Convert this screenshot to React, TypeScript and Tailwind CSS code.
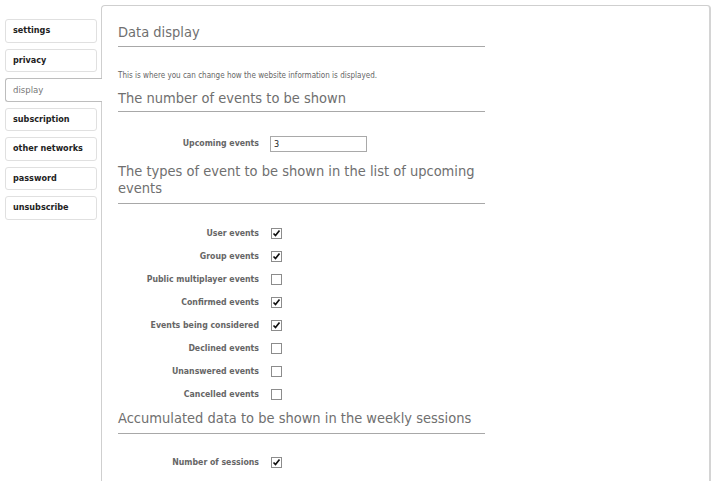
import React from "react";

const tabs = [
  "settings",
  "privacy",
  "display",
  "subscription",
  "other networks",
  "password",
  "unsubscribe",
];

const eventTypes = [
  { label: "User events", checked: true },
  { label: "Group events", checked: true },
  { label: "Public multiplayer events", checked: false },
  { label: "Confirmed events", checked: true },
  { label: "Events being considered", checked: true },
  { label: "Declined events", checked: false },
  { label: "Unanswered events", checked: false },
  { label: "Cancelled events", checked: false },
];

function Checkbox({ checked }: { checked: boolean }) {
  return (
    <span className="w-[11px] h-[11px] border border-[#8c8c8c] bg-white flex items-center justify-center">
      {checked && (
        <svg width="9" height="9" viewBox="0 0 9 9">
          <path d="M1.5 4.5 L3.5 6.5 L7.5 1.5" fill="none" stroke="#111" strokeWidth="1.7" />
        </svg>
      )}
    </span>
  );
}

function Row({ label, children }: { label: string; children: React.ReactNode }) {
  return (
    <div className="flex items-center h-[23px]">
      <span className="w-[141px] text-right text-[8.7px] font-bold text-[#666]">{label}</span>
      <span className="ml-[12px] flex items-center">{children}</span>
    </div>
  );
}

function Heading({ children, className = "" }: { children: React.ReactNode; className?: string }) {
  return (
    <h2 className={`text-[14.5px] leading-[17px] text-[#6f6f6f] border-b border-[#a8a8a8] ${className}`}>
      {children}
    </h2>
  );
}

export default function App() {
  return (
    <div
      className="min-h-screen bg-white flex pl-[5px] pt-[5px]"
      style={{ fontFamily: '"DejaVu Sans Condensed", "DejaVu Sans", Tahoma, sans-serif' }}
    >
      <nav className="w-[96px] pt-[14px] flex flex-col gap-[6px] shrink-0">
        {tabs.map((t) =>
          t === "display" ? (
            <div
              key={t}
              className="relative z-10 w-[97px] h-[23.5px] flex items-center pl-[7px] text-[9.5px] text-[#777] bg-white border border-r-0 border-[#bdbdbd] rounded-l-[3px]"
            >
              {t}
            </div>
          ) : (
            <div
              key={t}
              className="w-[92px] h-[23.5px] flex items-center pl-[7px] text-[9px] font-bold text-[#222] border border-[#e0e0e0] rounded-[3px]"
            >
              {t}
            </div>
          )
        )}
      </nav>

      <main className="w-[610px] border border-[#cfcfcf] border-r-2 border-r-[#d4d4d4] rounded-t-[4px] pl-[16px] min-h-[480px]">
        <div className="w-[367px]">
          <Heading className="mt-[18px] pb-[5px]">Data display</Heading>
          <p className="mt-[23px] text-[8px] leading-[12px] text-[#666]">
            This is where you can change how the website information is displayed.
          </p>
          <Heading className="mt-[8px] pb-[4px]">The number of events to be shown</Heading>

          <div className="mt-[24px] flex items-center h-[16px]">
            <span className="w-[141px] text-right text-[8.7px] font-bold text-[#666]">Upcoming events</span>
            <input
              readOnly
              value="3"
              className="ml-[11px] w-[97px] h-[16px] border border-[#a9a9a9] px-[3px] text-[9px] text-[#222] outline-none"
            />
          </div>

          <Heading className="mt-[11px] pb-[6px]">
            The types of event to be shown in the list of upcoming events
          </Heading>

          <div className="mt-[18px]">
            {eventTypes.map((e) => (
              <Row key={e.label} label={e.label}>
                <Checkbox checked={e.checked} />
              </Row>
            ))}
          </div>

          <Heading className="mt-[4px] pb-[6px]">Accumulated data to be shown in the weekly sessions</Heading>

          <div className="mt-[17px]">
            <Row label="Number of sessions">
              <Checkbox checked />
            </Row>
          </div>
        </div>
      </main>
    </div>
  );
}
